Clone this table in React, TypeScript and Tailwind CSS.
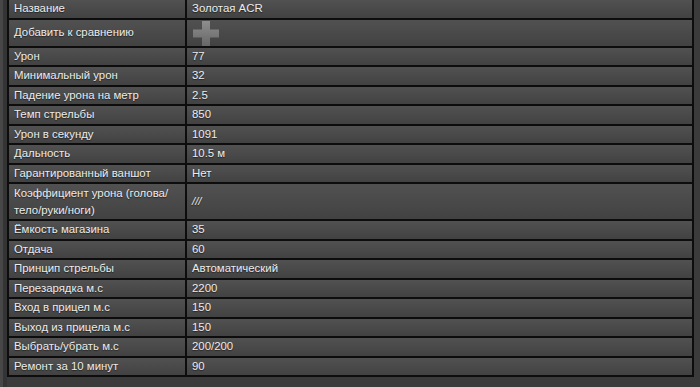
import React from 'react';

type Row = { label: string; value?: string; kind?: 'add' | 'tall' };

const rows: Row[] = [
  { label: 'Название', value: 'Золотая ACR' },
  { label: 'Добавить к сравнению', kind: 'add' },
  { label: 'Урон', value: '77' },
  { label: 'Минимальный урон', value: '32' },
  { label: 'Падение урона на метр', value: '2.5' },
  { label: 'Темп стрельбы', value: '850' },
  { label: 'Урон в секунду', value: '1091' },
  { label: 'Дальность', value: '10.5 м' },
  { label: 'Гарантированный ваншот', value: 'Нет' },
  { label: 'Коэффициент урона (голова/ тело/руки/ноги)', value: '///', kind: 'tall' },
  { label: 'Ёмкость магазина', value: '35' },
  { label: 'Отдача', value: '60' },
  { label: 'Принцип стрельбы', value: 'Автоматический' },
  { label: 'Перезарядка м.с', value: '2200' },
  { label: 'Вход в прицел м.с', value: '150' },
  { label: 'Выход из прицела м.с', value: '150' },
  { label: 'Выбрать/убрать м.с', value: '200/200' },
  { label: 'Ремонт за 10 минут', value: '90' },
];

function PlusIcon() {
  return (
    <svg width="26" height="25" viewBox="0 0 26 25" className="blur-[0.4px]">
      <defs>
        <linearGradient id="plusFill" x1="0" y1="0" x2="0" y2="1">
          <stop offset="0" stopColor="#8e8e8e" />
          <stop offset="1" stopColor="#676767" />
        </linearGradient>
      </defs>
      <path d="M9 0h8v8.5h9v8h-9v8.5h-8v-8.5h-9v-8h9z" fill="url(#plusFill)" />
    </svg>
  );
}

export default function App() {
  const cell = 'bg-linear-to-b from-[#515151] to-[#424242] pl-[5px] align-middle';
  return (
    <div
      className="w-[700px] h-[387px] bg-[#3b3b3b] flex overflow-hidden text-[11.4px] text-[#ececec]"
      style={{ fontFamily: '"Liberation Sans", Arial, sans-serif' }}
    >
      {/* edge strip */}
      <div className="w-[3px] bg-[#474747]" />
      <div className="w-[4px] bg-[#343434]" />
      <div className="flex-1 pr-[6px]">
        <table className="w-full border-collapse -mt-[2px] [text-shadow:0_1px_1px_rgba(0,0,0,0.5)]">
          <tbody>
            {rows.map((r) => (
              <tr
                key={r.label}
                className={
                  r.kind === 'add' ? 'h-[27px]' : r.kind === 'tall' ? 'h-[37px]' : 'h-[19.5px]'
                }
              >
                <td className={`${cell} w-[178px] border-2 border-[#0d0d0d] leading-[17px]`}>
                  {r.kind === 'tall' ? (
                    <>
                      Коэффициент урона (голова/
                      <br />
                      тело/руки/ноги)
                    </>
                  ) : (
                    r.label
                  )}
                </td>
                <td className={`${cell} border-2 border-[#0d0d0d] leading-[15px]`}>
                  {r.kind === 'add' ? (
                    <div className="flex pt-[1px] pl-[1px]">
                      <PlusIcon />
                    </div>
                  ) : r.kind === 'tall' ? (
                    <span className="italic">{r.value}</span>
                  ) : (
                    r.value
                  )}
                </td>
              </tr>
            ))}
          </tbody>
        </table>
      </div>
    </div>
  );
}
